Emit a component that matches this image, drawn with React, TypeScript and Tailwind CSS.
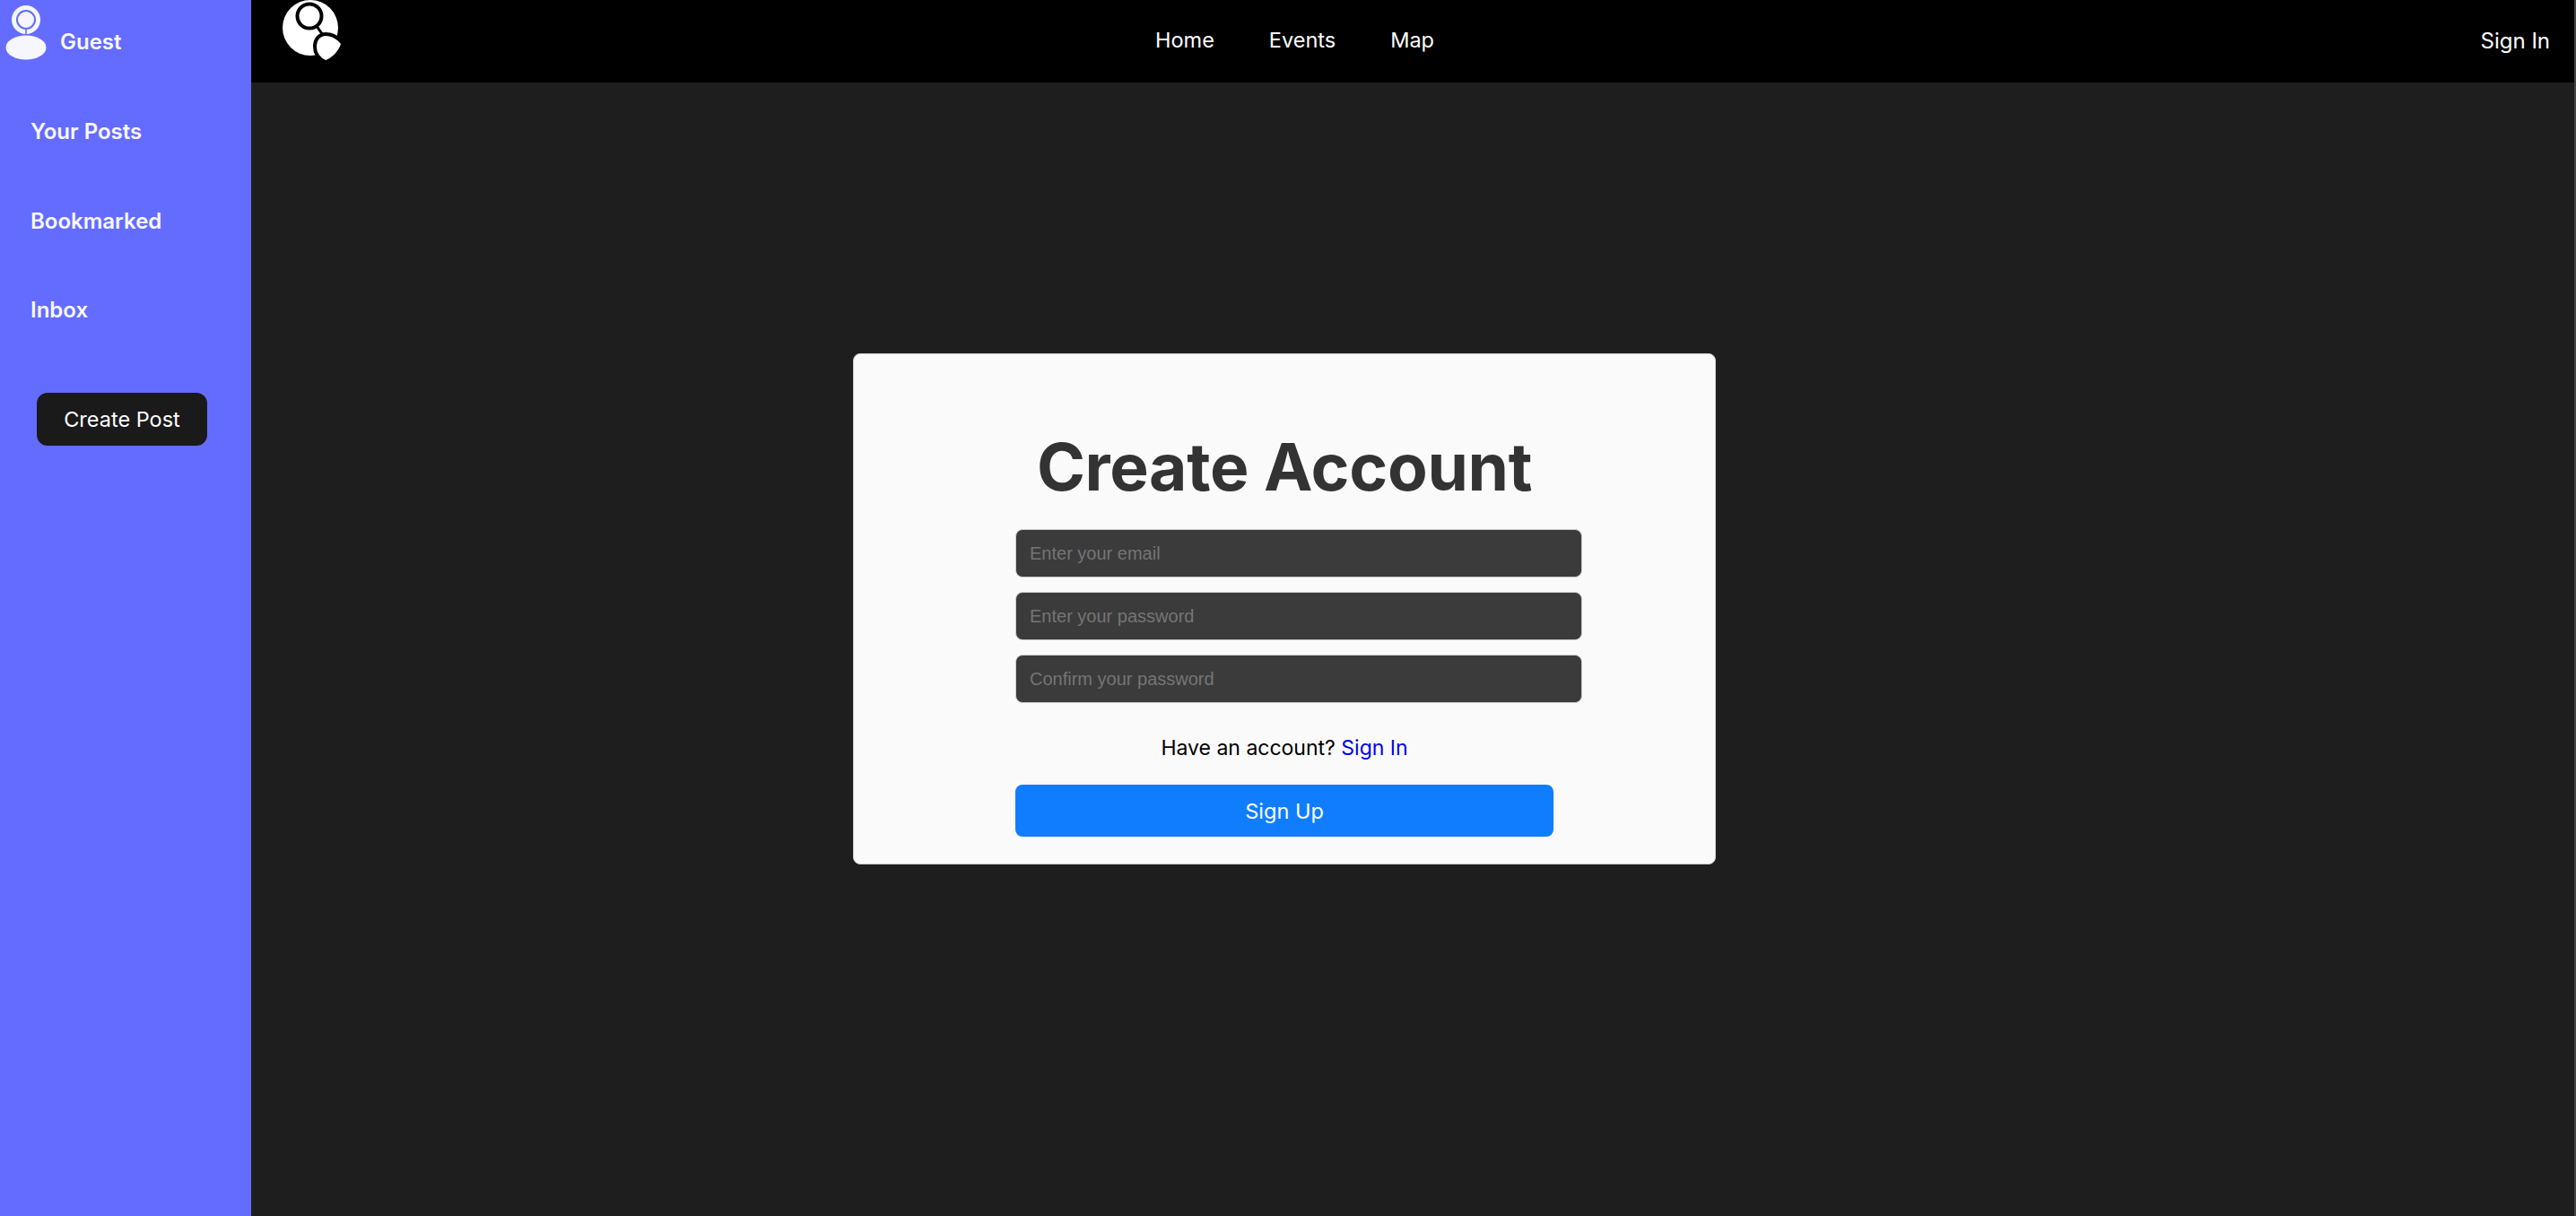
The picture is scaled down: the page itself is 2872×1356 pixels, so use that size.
const FONT = "font-['Inter','Liberation_Sans',sans-serif]";

function Avatar() {
  return (
    <svg width="58" height="68" viewBox="0 0 58 68" className="shrink-0">
      <circle cx="29" cy="22" r="16" fill="#f5f6ff" />
      <circle cx="29" cy="22" r="10" fill="none" stroke="#646cff" strokeWidth="2" />
      <path d="M29 32V38" stroke="#646cff" strokeWidth="1.5" />
      <ellipse cx="29" cy="53" rx="22.5" ry="13.5" fill="#f5f6ff" />
    </svg>
  );
}

function Logo() {
  return (
    <svg width="72" height="72" viewBox="0 0 72 72">
      <circle cx="36" cy="31" r="31" fill="#fff" />
      <circle cx="35" cy="18" r="13.5" fill="#fff" stroke="#000" strokeWidth="4" />
      <path d="M43 29L52 42" stroke="#000" strokeWidth="3" />
      <path
        d="M53 40C60 40 66 44 70 49C68 56 60 65 53 67C47 64 43 59 43 52C43 45 47 40 53 40Z"
        fill="#fff"
        stroke="#000"
        strokeWidth="8"
        paintOrder="stroke"
      />
    </svg>
  );
}

const INPUT = "h-[54px] w-[632px] rounded-[8px] border border-[#ccc] bg-[#3b3b3b] px-[15px] font-['Liberation_Sans',sans-serif] text-[20px] placeholder:text-[#757575]";

export default function App() {
  return (
    <div className={`flex h-[1356px] w-[2872px] overflow-hidden border-r-2 border-[#444] bg-[#1e1e1e] ${FONT}`}>
      <aside className="flex w-[280px] shrink-0 flex-col bg-[#646cff] text-[#f8f8ff]">
        <div className="flex h-[68px] items-start">
          <Avatar />
          <span className="ml-[9px] mt-[35px] text-[24px] font-semibold leading-[24px]">Guest</span>
        </div>
        <nav className="mt-[64px] flex flex-col gap-[69.5px] pl-[34px] text-[24px] font-semibold leading-[30px]">
          <a>Your Posts</a>
          <a>Bookmarked</a>
          <a>Inbox</a>
        </nav>
        <button className="ml-[41px] mt-[77px] h-[59px] w-[190px] rounded-[12px] bg-[#1a1a1a] text-[23.5px] font-normal text-white">
          Create Post
        </button>
      </aside>
      <div className="flex min-w-0 flex-1 flex-col">
        <header className="relative flex h-[92px] shrink-0 items-center justify-between bg-black pr-[27px] text-[24px] text-white">
          <div className="ml-[30px] self-start">
            <Logo />
          </div>
          <nav className="absolute left-[1008px] top-[29px] flex gap-[61px] text-[23.5px] leading-[32px]">
            <a>Home</a>
            <a>Events</a>
            <a>Map</a>
          </nav>
          <a className="leading-[32px]">Sign In</a>
        </header>
        <main className="flex-1 pl-[671px] pt-[302px]">
          <div className="h-[570px] w-[962px] rounded-[8px] border border-[#ccc] bg-[#fafafa] pl-[180px] pt-[86px]">
            <h1 className="w-[600px] text-center text-[73px] font-bold leading-[80px] tracking-[-0.3px] text-[#333]">Create Account</h1>
            <form className="mt-[29px] flex flex-col">
              <input disabled placeholder="Enter your email" className={INPUT} />
              <input disabled placeholder="Enter your password" className={`mt-[16px] ${INPUT}`} />
              <input disabled placeholder="Confirm your password" className={`mt-[16px] ${INPUT}`} />
              <p className="mt-[34px] w-[600px] text-center text-[23px] leading-[32px] text-black">
                Have an account? <a className="text-[#0000ee]">Sign In</a>
              </p>
              <button type="button" className="mt-[25px] h-[58px] w-[600px] rounded-[8px] bg-[#107dff] pt-[1px] text-[23.5px] font-normal text-white">
                Sign Up
              </button>
            </form>
          </div>
        </main>
      </div>
    </div>
  );
}
